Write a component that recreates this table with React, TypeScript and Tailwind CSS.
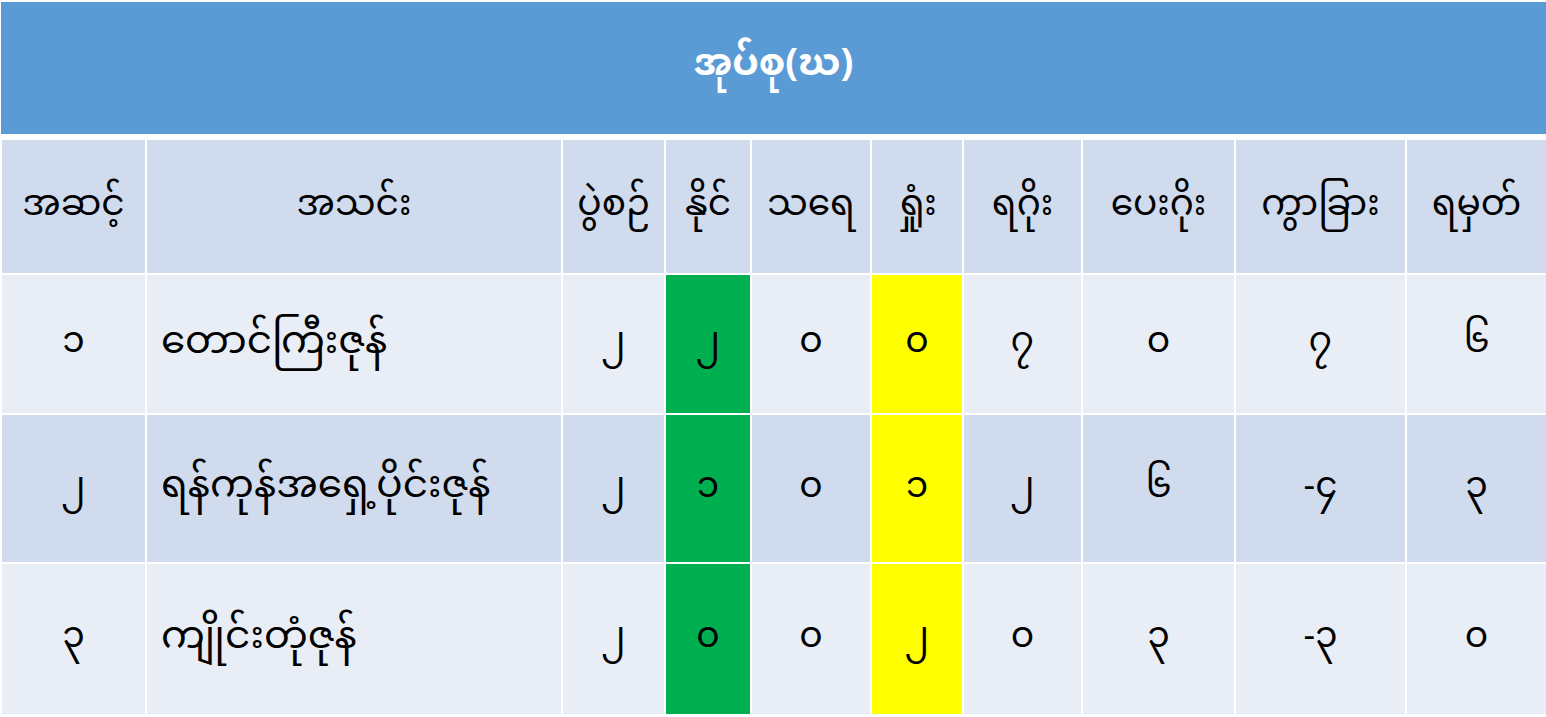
import React from 'react';

const headers = ['အဆင့်', 'အသင်း', 'ပွဲစဉ်', 'နိုင်', 'သရေ', 'ရှုံး', 'ရဂိုး', 'ပေးဂိုး', 'ကွာခြား', 'ရမှတ်'];

const rows = [
  ['၁', 'တောင်ကြီးဇုန်', '၂', '၂', '၀', '၀', '၇', '၀', '၇', '၆'],
  ['၂', 'ရန်ကုန်အရှေ့ပိုင်းဇုန်', '၂', '၁', '၀', '၁', '၂', '၆', '-၄', '၃'],
  ['၃', 'ကျိုင်းတုံဇုန်', '၂', '၀', '၀', '၂', '၀', '၃', '-၃', '၀'],
];

const font = { fontFamily: '"Noto Sans Myanmar", "Padauk", "Myanmar Text", "Noto Sans", "DejaVu Sans", sans-serif' };

export default function App() {
  return (
    <div className="w-[1546px] h-[717px] bg-white overflow-hidden pt-[2px]" style={font}>
      {/* Title band */}
      <div className="ml-[1px] h-[132px] bg-[#5b9bd5] flex items-center justify-center">
        <span className="text-white font-bold text-[38px] -mt-[4px]">အုပ်စု(ဃ)</span>
      </div>

      {/* Table */}
      <div className="mt-[6px] ml-[2px] grid grid-cols-[143px_414px_101px_84px_118px_90px_117px_151px_169px_1fr] grid-rows-[133px_138px_147px_150px] gap-[2px] bg-white text-black text-[36px]">
        {headers.map((h) => (
          <div key={h} className="bg-[#d0dbee] flex items-center justify-center">
            {h}
          </div>
        ))}
        {rows.map((r, ri) =>
          r.map((c, ci) => {
            const stripe = ri === 1 ? 'bg-[#d0dbee]' : 'bg-[#e9edf6]';
            const bg = ci === 3 ? 'bg-[#00b050]' : ci === 5 ? 'bg-[#ffff00]' : stripe;
            return (
              <div
                key={`${ri}-${ci}`}
                className={`${bg} flex items-center ${ci === 1 ? 'justify-start pl-[14px] text-[39px]' : 'justify-center'}`}
              >
                {c}
              </div>
            );
          })
        )}
      </div>
    </div>
  );
}
